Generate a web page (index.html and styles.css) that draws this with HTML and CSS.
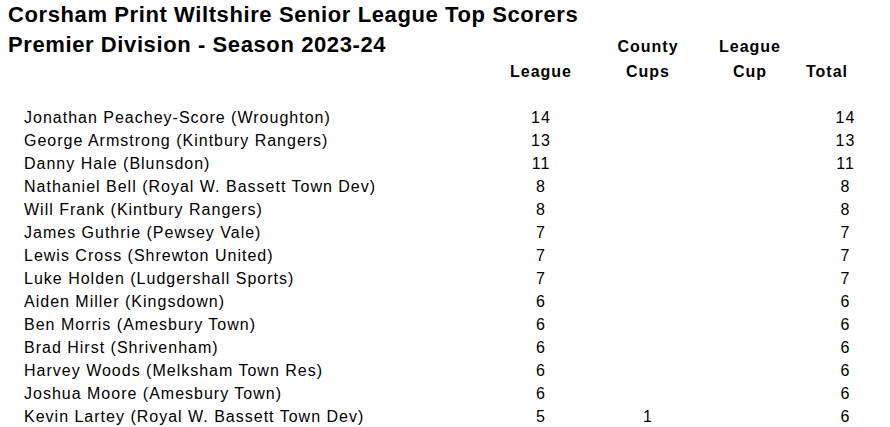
FILE: index.html
```html
<!DOCTYPE html>
<html>
<head>
<meta charset="utf-8">
<link rel="stylesheet" href="styles.css">
</head>
<body>
<div class="sheet">
  <div class="head">
    <div class="title t1">Corsham Print Wiltshire Senior League Top Scorers</div>
    <div class="title t2">Premier Division - Season 2023-24</div>
    <div class="hd c-county r2">County</div>
    <div class="hd c-lcup r2">League</div>
    <div class="hd c-league r3">League</div>
    <div class="hd c-county r3">Cups</div>
    <div class="hd c-lcup r3">Cup</div>
    <div class="hd c-total r3 total-hd">Total</div>
  </div>

  <div class="rows">
    <div class="row"><div class="name">Jonathan Peachey-Score (Wroughton)</div><div class="num">14</div><div class="num"></div><div class="num"></div><div class="num tot">14</div></div>
    <div class="row"><div class="name">George Armstrong (Kintbury Rangers)</div><div class="num">13</div><div class="num"></div><div class="num"></div><div class="num tot">13</div></div>
    <div class="row"><div class="name">Danny Hale (Blunsdon)</div><div class="num">11</div><div class="num"></div><div class="num"></div><div class="num tot">11</div></div>
    <div class="row"><div class="name">Nathaniel Bell (Royal W. Bassett Town Dev)</div><div class="num">8</div><div class="num"></div><div class="num"></div><div class="num tot">8</div></div>
    <div class="row"><div class="name">Will Frank (Kintbury Rangers)</div><div class="num">8</div><div class="num"></div><div class="num"></div><div class="num tot">8</div></div>
    <div class="row"><div class="name">James Guthrie (Pewsey Vale)</div><div class="num">7</div><div class="num"></div><div class="num"></div><div class="num tot">7</div></div>
    <div class="row"><div class="name">Lewis Cross (Shrewton United)</div><div class="num">7</div><div class="num"></div><div class="num"></div><div class="num tot">7</div></div>
    <div class="row"><div class="name">Luke Holden (Ludgershall Sports)</div><div class="num">7</div><div class="num"></div><div class="num"></div><div class="num tot">7</div></div>
    <div class="row"><div class="name">Aiden Miller (Kingsdown)</div><div class="num">6</div><div class="num"></div><div class="num"></div><div class="num tot">6</div></div>
    <div class="row"><div class="name">Ben Morris (Amesbury Town)</div><div class="num">6</div><div class="num"></div><div class="num"></div><div class="num tot">6</div></div>
    <div class="row"><div class="name">Brad Hirst (Shrivenham)</div><div class="num">6</div><div class="num"></div><div class="num"></div><div class="num tot">6</div></div>
    <div class="row"><div class="name">Harvey Woods (Melksham Town Res)</div><div class="num">6</div><div class="num"></div><div class="num"></div><div class="num tot">6</div></div>
    <div class="row"><div class="name">Joshua Moore (Amesbury Town)</div><div class="num">6</div><div class="num"></div><div class="num"></div><div class="num tot">6</div></div>
    <div class="row"><div class="name">Kevin Lartey (Royal W. Bassett Town Dev)</div><div class="num">5</div><div class="num">1</div><div class="num"></div><div class="num tot">6</div></div>
  </div>
</div>
</body>
</html>
```

FILE: styles.css
```css
html, body {
  margin: 0;
  padding: 0;
  background: #ffffff;
}
body {
  font-family: "Liberation Sans", Arial, sans-serif;
  color: #000000;
}
.head {
  display: grid;
  grid-template-columns: 490px 102px 112px 92px 96px;
  grid-template-rows: 30px 30px 24px;
  align-items: baseline;
}
.title {
  font-size: 22px;
  font-weight: bold;
  letter-spacing: 0.6px;
  line-height: 30px;
  padding-left: 8px;
  white-space: nowrap;
}
.t1 {
  grid-column: 1 / 6;
  grid-row: 1;
}
.t2 {
  grid-column: 1;
  grid-row: 2;
}
.hd {
  font-size: 16px;
  font-weight: bold;
  letter-spacing: 1px;
  line-height: 24px;
  text-align: center;
  white-space: nowrap;
}
.r2 { grid-row: 2; }
.r3 { grid-row: 3; }
.c-league { grid-column: 2; }
.c-county { grid-column: 3; }
.c-lcup { grid-column: 4; }
.c-total { grid-column: 5; }
.total-hd {
  text-align: left;
  padding-left: 10px;
}
.rows {
  padding-top: 21.6px;
}
.row {
  display: grid;
  grid-template-columns: 490px 102px 112px 92px 96px;
  height: 23px;
  font-size: 16px;
  line-height: 23px;
  letter-spacing: 1px;
}
.name {
  padding-left: 24px;
  white-space: nowrap;
}
.num {
  text-align: center;
}
.tot {
  padding-left: 3px;
}
```
